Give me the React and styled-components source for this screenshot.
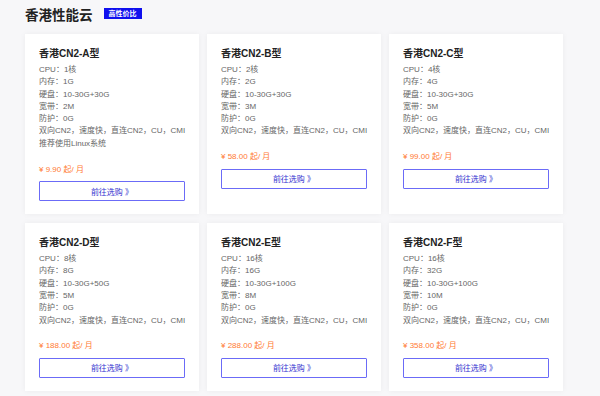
import React from 'react';
import styled, { createGlobalStyle } from 'styled-components';

const GlobalStyle = createGlobalStyle`
    html, body {
        margin: 0;
        padding: 0;
        background: #f7f7f9;
    }
    body {
        font-family: "Liberation Sans", "Noto Sans CJK SC", sans-serif;
        -webkit-font-smoothing: antialiased;
    }
`;

const Page = styled.div`
    width: 600px;
    height: 396px;
    box-sizing: border-box;
    padding: 5px 0 0 25px;
    overflow: hidden;
`;

const Header = styled.div`
    display: flex;
    align-items: center;
    height: 17px;
    margin-bottom: 12px;
`;

const Title = styled.h2`
    margin: 0;
    font-size: 13.5px;
    font-weight: 700;
    color: #222;
    letter-spacing: 0;
`;

const Badge = styled.span`
    margin-left: 11px;
    height: 11px;
    line-height: 11px;
    padding: 0 5px;
    background: #1010ee;
    color: #fff;
    font-size: 7px;
    font-weight: 700;
`;

const Grid = styled.div`
    display: grid;
    grid-template-columns: repeat(3, 174px);
    column-gap: 8px;
    row-gap: 9px;
`;

const Card = styled.div`
    background: #fff;
    box-shadow: 0 0 6px rgba(0, 0, 0, 0.05);
    padding: 12px 14px 13px;
    display: flex;
    flex-direction: column;
`;

const Name = styled.div`
    font-size: 10px;
    font-weight: 700;
    color: #222;
    line-height: 16px;
    margin-bottom: 2px;
`;

const Spec = styled.div`
    font-size: 8px;
    line-height: 12.3px;
    color: #666;
    white-space: nowrap;
`;

const Price = styled.div`
    margin-top: 13.5px;
    font-size: 8px;
    line-height: 12px;
    color: #ff7a33;
`;

const BuyButton = styled.button`
    margin-top: 5.5px;
    height: 20px;
    width: 100%;
    box-sizing: border-box;
    background: #fff;
    border: 1px solid #6b6bf7;
    border-radius: 1px;
    color: #3434d0;
    font-family: inherit;
    font-size: 8px;
    cursor: pointer;
`;

const plans = [
    { name: '香港CN2-A型', cpu: '1核', mem: '1G', disk: '10-30G+30G', bw: '2M', extra: '推荐使用Linux系统', price: '9.90' },
    { name: '香港CN2-B型', cpu: '2核', mem: '2G', disk: '10-30G+30G', bw: '3M', price: '58.00' },
    { name: '香港CN2-C型', cpu: '4核', mem: '4G', disk: '10-30G+30G', bw: '5M', price: '99.00' },
    { name: '香港CN2-D型', cpu: '8核', mem: '8G', disk: '10-30G+50G', bw: '5M', price: '188.00' },
    { name: '香港CN2-E型', cpu: '16核', mem: '16G', disk: '10-30G+100G', bw: '8M', price: '288.00' },
    { name: '香港CN2-F型', cpu: '16核', mem: '32G', disk: '10-30G+100G', bw: '10M', price: '358.00' },
];

const PlanCard = ({ plan }) => (
    <Card>
        <Name>{plan.name}</Name>
        <Spec>CPU：{plan.cpu}</Spec>
        <Spec>内存：{plan.mem}</Spec>
        <Spec>硬盘：{plan.disk}</Spec>
        <Spec>宽带：{plan.bw}</Spec>
        <Spec>防护：0G</Spec>
        <Spec>双向CN2，速度快，直连CN2，CU，CMI</Spec>
        {plan.extra && <Spec>{plan.extra}</Spec>}
        <Price>¥ {plan.price} 起/ 月</Price>
        <BuyButton>前往选购 》</BuyButton>
    </Card>
);

export default function App() {
    return (
        <Page>
            <GlobalStyle />
            <Header>
                <Title>香港性能云</Title>
                <Badge>高性价比</Badge>
            </Header>
            <Grid>
                {plans.map(p => <PlanCard key={p.name} plan={p} />)}
            </Grid>
        </Page>
    );
}
